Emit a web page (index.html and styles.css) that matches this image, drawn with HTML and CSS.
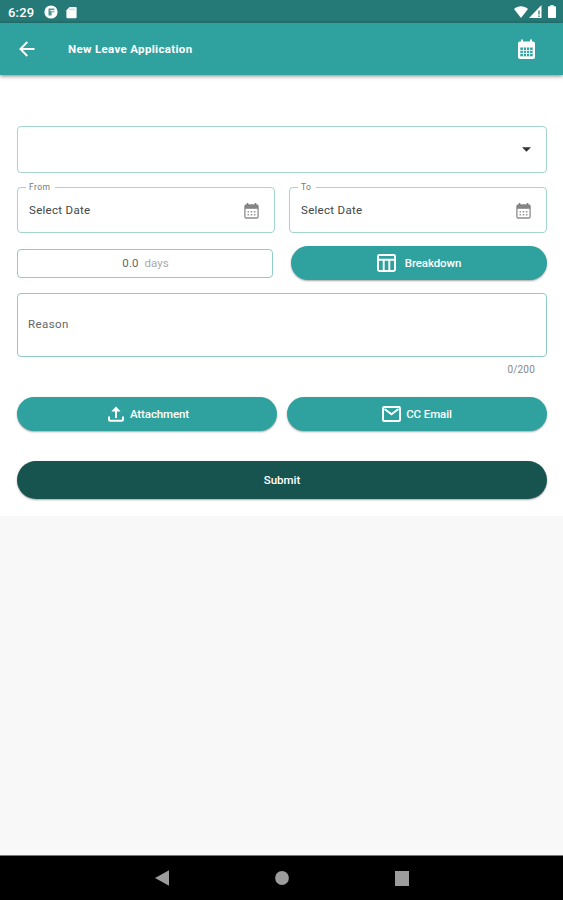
FILE: index.html
```html
<!DOCTYPE html>
<html lang="en">
<head>
<meta charset="utf-8">
<title>New Leave Application</title>
<link rel="stylesheet" href="styles.css">
</head>
<body>
<div class="screen">
  <div class="status">
    <span class="clock">6:29</span>
    <svg class="st-app" width="14" height="14" viewBox="0 0 14 14"><circle cx="7" cy="7" r="6.600" fill="#fff"/><path d="M4.500 3.500h5.800v3.800H7.600v3.200H4.500z" fill="#4f9492"/><path d="M6.300 5.100h4v1.200h-4z" fill="#fff"/></svg>
    <svg class="st-sd" width="11" height="13" viewBox="0 0 11 13"><path d="M3.600 1h6a1 1 0 0 1 1 1v9.200a1 1 0 0 1-1 1H1.400a1 1 0 0 1-1-1V4.200z" fill="#fff"/><path d="M4 2.500v1.700M6 2.500v1.700M8 2.500v1.700" stroke="#7fb2b0" stroke-width=".8"/></svg>
    <div class="st-right">
      <svg width="14" height="12" viewBox="0 0 14 12"><path d="M0 3C4-.6 10-.6 14 3L7 12z" fill="#fff"/></svg>
      <svg width="13" height="13" viewBox="0 0 13 13"><path d="M0 13L12.500 0v13z" fill="#fff"/><path d="M10 5.500v4M10 10.600v1.400" stroke="#257977" stroke-width="1.300"/></svg>
      <svg class="battery" width="8" height="13" viewBox="0 0 8 13"><path d="M2.500 0h3v1.300H7a1 1 0 0 1 1 1V12a1 1 0 0 1-1 1H1a1 1 0 0 1-1-1V2.300a1 1 0 0 1 1-1h1.500z" fill="#fff"/></svg>
    </div>
  </div>
  <header class="appbar">
    <svg class="back" width="16" height="16" viewBox="0 0 16 16" fill="none" stroke="#fff" stroke-width="1.900"><path d="M15.500 8H2M8.300 1L1.400 8l6.900 7"/></svg>
    <h1>New Leave Application</h1>
    <svg class="cal-top" width="19" height="21" viewBox="0 0 19 21"><path d="M3 2.500h1V.5h2v2h7v-2h2v2h1a2 2 0 0 1 2 2V18a2 2 0 0 1-2 2H3a2 2 0 0 1-2-2V4.500a2 2 0 0 1 2-2z" fill="#fff"/><path d="M3.300 8.500h12.400v8.800H3.300z" fill="#2fa29f"/><path d="M3 11.400h13M3 14.400h13M6.400 8v9.500M9.500 8v9.500M12.600 8v9.500" stroke="#e4f4f3" stroke-width="1"/></svg>
  </header>
  <main class="form">
    <div class="box select"><svg width="9" height="5" viewBox="0 0 9 5"><path d="M0 .3h9L4.500 4.800z" fill="#333"/></svg></div>
    <div class="row dates">
      <div class="box date"><span class="label">From</span><span class="value">Select Date</span>
        <svg width="15" height="16" viewBox="0 0 15 16"><path d="M3.500 0v3M11.500 0v3" stroke="#777" stroke-width="1.500"/><rect x=".9" y="2" width="13.200" height="13" rx="1.300" fill="#fff" stroke="#8c8c8c" stroke-width="1.300"/><path d="M1 2h13v3.800H1z" fill="#858585"/><path d="M3.500 8.700h8M3.500 11.700h8" stroke="#999" stroke-width="1.400" stroke-dasharray="1.600 1.600"/></svg>
      </div>
      <div class="box date"><span class="label">To</span><span class="value">Select Date</span>
        <svg width="15" height="16" viewBox="0 0 15 16"><path d="M3.500 0v3M11.500 0v3" stroke="#777" stroke-width="1.500"/><rect x=".9" y="2" width="13.200" height="13" rx="1.300" fill="#fff" stroke="#8c8c8c" stroke-width="1.300"/><path d="M1 2h13v3.800H1z" fill="#858585"/><path d="M3.500 8.700h8M3.500 11.700h8" stroke="#999" stroke-width="1.400" stroke-dasharray="1.600 1.600"/></svg>
      </div>
    </div>
    <div class="row totals">
      <div class="box days"><span class="num">0.0</span><span class="unit">days</span></div>
      <div class="btn breakdown"><svg width="19" height="18" viewBox="0 0 19 18" fill="none" stroke="#fff" stroke-width="1.900"><rect x="1" y="1" width="17" height="16" rx="1.200"/><path d="M1 5.800h17M6.700 5.800V17M12.300 5.800V17"/></svg><span>Breakdown</span></div>
    </div>
    <div class="box reason"><span>Reason</span></div>
    <div class="counter">0/200</div>
    <div class="row actions">
      <div class="btn attach"><svg width="16" height="16" viewBox="0 0 16 16" fill="none" stroke="#fff" stroke-width="2"><path d="M1 10.500v3A1.300 1.300 0 0 0 2.300 14.800h11.400A1.300 1.300 0 0 0 15 13.500v-3M8 12V3"/><path d="M3.300 5.500L8 .4l4.700 5.100z" fill="#fff" stroke="none"/></svg><span>Attachment</span></div>
      <div class="btn email"><svg width="19" height="16" viewBox="0 0 19 16" fill="none" stroke="#fff" stroke-width="1.900"><rect x="1" y="1" width="17" height="14" rx="1"/><path d="M2.500 3l7 5.300L16.500 3"/></svg><span>CC Email</span></div>
    </div>
    <div class="btn submit"><span>Submit</span></div>
  </main>
  <div class="rest"></div>
  <nav class="navbar">
    <svg width="14" height="16" viewBox="0 0 14 16"><path d="M14 .3v15.400L0 8z" fill="#9c9c9c"/></svg>
    <svg width="14" height="14" viewBox="0 0 14 14"><circle cx="7" cy="7" r="6.900" fill="#9c9c9c"/></svg>
    <svg width="14" height="15" viewBox="0 0 14 15"><path d="M0 0h14v15H0z" fill="#9c9c9c"/></svg>
  </nav>
</div>
</body>
</html>
```
FILE: styles.css
```css
* { box-sizing: border-box; }
body { margin: 0; font-family: Roboto, "Liberation Sans", sans-serif; }
svg { display: block; flex: none; }
.screen { width: 563px; height: 900px; display: flex; flex-direction: column; background: #f8f8f8; overflow: hidden; }
.status { height: 23px; flex: none; background: #257977; color: #fff; display: flex; align-items: center; padding-left: 8px; padding-right: 7px; }
.clock { font-size: 13px; font-weight: 500; width: 36px; letter-spacing: .2px; padding-top: 1px; }
.st-app { margin-top: 1px; }
.st-sd { margin: 1px 0 0 8px; }
.st-right { margin-left: auto; display: flex; align-items: center; gap: 1px; }
.battery { margin-left: 5px; }
.appbar { height: 52px; flex: none; background: #2fa29f; color: #fff; display: flex; align-items: center; padding: 0 27px 0 19px; box-shadow: 0 1px 4px rgba(0,0,0,.5); z-index: 1; }
h1 { margin: 0 auto 0 33px; font-size: 11.5px; font-weight: 700; letter-spacing: .33px; line-height: 16px; }
.form { flex: none; height: 441px; background: #fff; padding: 51px 16px 0 17px; }
.box { border: 1.5px solid #a5d4cc; border-radius: 4px; background: #fff; display: flex; align-items: center; }
.row { display: flex; }
.select { height: 47px; justify-content: flex-end; padding-right: 15px; }
.dates { margin-top: 14px; gap: 14px; }
.date { flex: 1; height: 46px; justify-content: space-between; padding: 0 15px 0 11px; position: relative; }
.date svg { margin-top: 1px; }
.value { font-size: 11.5px; color: #444; letter-spacing: .3px; margin-top: -1px; }
.label { position: absolute; left: 8px; top: -7px; height: 12px; line-height: 12px; padding: 0 5px 0 3px; background: #fff; font-size: 8.5px; color: #777; letter-spacing: .4px; }
.totals { margin-top: 13px; justify-content: space-between; align-items: center; }
.days { width: 256px; height: 29px; justify-content: center; border-color: #8fcbc7; font-size: 11.5px; gap: 6px; padding-left: 1px; }
.num { color: #666; letter-spacing: .1px; }
.unit { color: #aaa; }
.btn { height: 34px; border-radius: 19px; background: #2fa29f; color: #fff; display: flex; align-items: center; justify-content: center; font-size: 11.5px; font-weight: 500; box-shadow: 0 1px 2px rgba(0,0,0,.35); }
.breakdown { width: 256px; gap: 9px; letter-spacing: -.1px; }
.reason { margin-top: 13px; height: 64px; padding-left: 10px; font-size: 11.5px; color: #666; letter-spacing: .4px; border-color: #8fcbc4; }
.reason span { margin-top: -3px; }
.counter { height: 14px; margin-top: 6px; line-height: 14px; padding-right: 12px; text-align: right; font-size: 10px; letter-spacing: .2px; color: #888; }
.actions { margin-top: 20px; justify-content: space-between; }
.actions .btn { width: 260px; }
.attach { gap: 6px; padding-left: 3px; letter-spacing: -.1px; }
.email { gap: 5px; letter-spacing: -.1px; }
.submit { margin-top: 30px; height: 38px; background: #18544f; }
.submit span { margin-top: -1px; }
.rest { flex: 1; background: #f8f8f8; }
.navbar { height: 45px; flex: none; background: #000; border-top: 1px solid #777; display: flex; align-items: center; justify-content: center; gap: 106px; }
```
